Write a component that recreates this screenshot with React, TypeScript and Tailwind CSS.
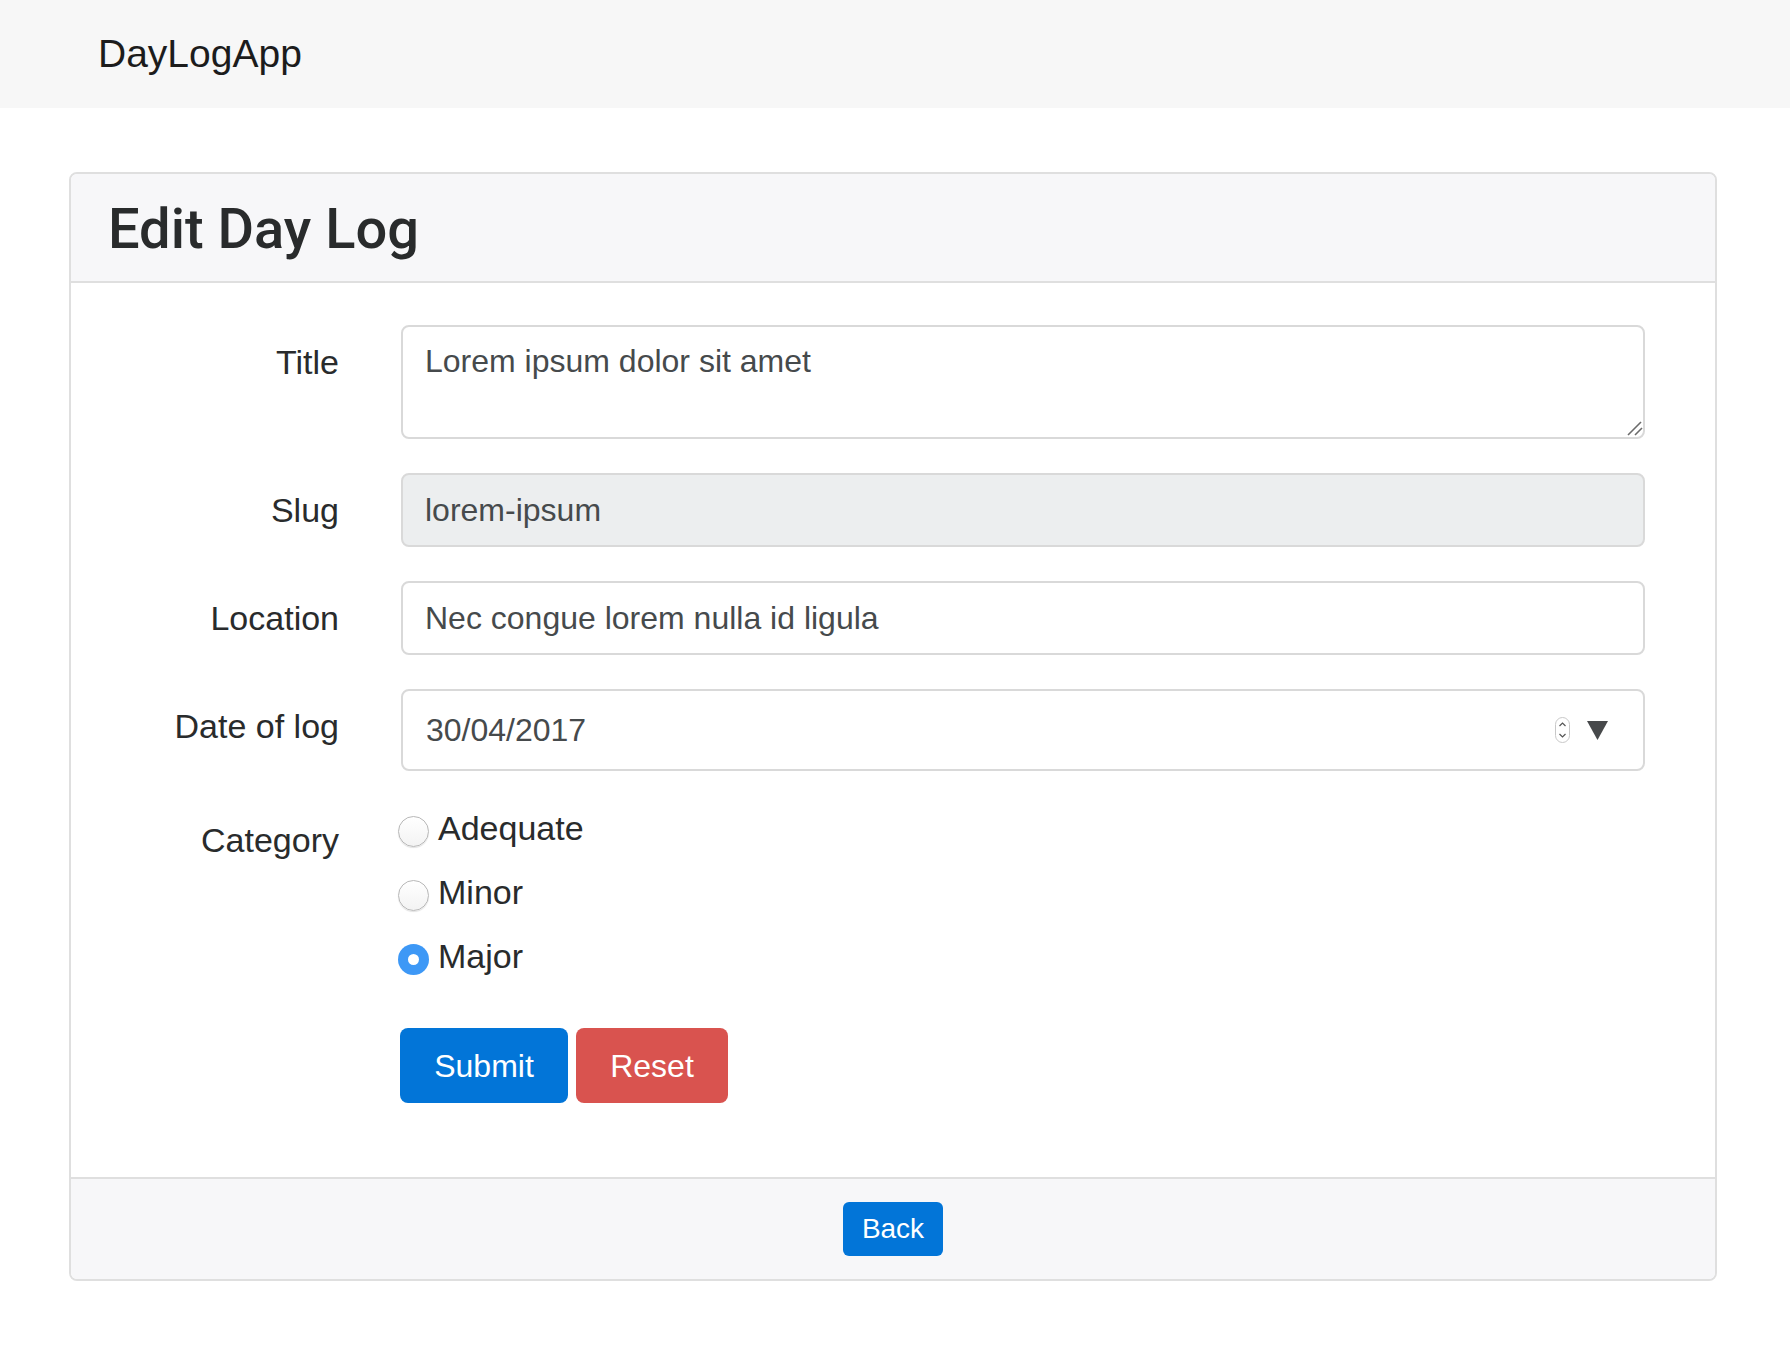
import { useState } from "react";

const categories = ["Adequate", "Minor", "Major"];

function FieldLabel({ children }: { children: React.ReactNode }) {
  return (
    <label className="w-[228px] shrink-0 h-[74px] flex items-center justify-end text-[34px] text-[#292b2c]">
      {children}
    </label>
  );
}

export default function App() {
  const [category, setCategory] = useState("Major");

  return (
    <div className="min-h-screen bg-white font-['Liberation_Sans',Arial,sans-serif] text-[#292b2c]">
      {/* navbar */}
      <nav className="h-[108px] bg-[#f7f7f7] flex items-center pl-[98px]">
        <a href="#" className="text-[39px] text-[#1c1c1c]">DayLogApp</a>
      </nav>

      <div className="pl-[69px] pr-[73px] mt-[64px]">
        <div className="border-2 border-[#dfdfdf] rounded-[8px] overflow-hidden">
          <div className="bg-[#f7f7f9] border-b-2 border-[#dfdfdf] pt-[25px] pb-[22px] px-[37px]">
            <h3 className="font-['Roboto',sans-serif] font-medium text-[56px] leading-[60px] text-[#292b2c]">
              Edit Day Log
            </h3>
          </div>

          <form className="pt-[42px] pb-[74px] pl-[40px] pr-[70px]" onSubmit={(e) => e.preventDefault()}>
            <div className="flex gap-[62px] mb-[34px]">
              <FieldLabel>Title</FieldLabel>
              <div className="relative flex-1 flex">
                <textarea
                  defaultValue="Lorem ipsum dolor sit amet"
                  className="flex-1 h-[114px] resize-none border-2 border-[#d9d9d9] rounded-[8px] px-[22px] pt-[14px] text-[32px] leading-[40px] text-[#464a4c] outline-none"
                />
                {/* resize grip */}
                <svg width="16" height="15" viewBox="0 0 16 15" className="absolute right-[2px] bottom-[3px] pointer-events-none">
                  <path d="M1 14 L14 1" stroke="#6b6b6b" strokeWidth="1.6" />
                  <path d="M8 14 L15 7" stroke="#6b6b6b" strokeWidth="1.6" />
                </svg>
              </div>
            </div>

            <div className="flex gap-[62px] mb-[34px]">
              <FieldLabel>Slug</FieldLabel>
              <input
                readOnly
                defaultValue="lorem-ipsum"
                className="flex-1 h-[74px] border-2 border-[#d9d9d9] rounded-[8px] px-[22px] bg-[#eceeef] text-[32px] text-[#464a4c] outline-none"
              />
            </div>

            <div className="flex gap-[62px] mb-[34px]">
              <FieldLabel>Location</FieldLabel>
              <input
                defaultValue="Nec congue lorem nulla id ligula"
                className="flex-1 h-[74px] border-2 border-[#d9d9d9] rounded-[8px] px-[22px] text-[32px] text-[#464a4c] outline-none"
              />
            </div>

            <div className="flex gap-[62px] mb-[25px]">
              <FieldLabel>Date of log</FieldLabel>
              <div className="flex-1 h-[82px] border-2 border-[#d9d9d9] rounded-[8px] pl-[23px] pr-[35px] flex items-center text-[32px] text-[#464a4c]">
                <span className="flex-1">30/04/2017</span>
                {/* stepper */}
                <svg width="15" height="26" viewBox="0 0 15 26" className="mr-[17px]">
                  <rect x="0.5" y="0.5" width="14" height="25" rx="7" fill="#fff" stroke="#c8c8c8" />
                  <path d="M4.5 9 L7.5 6 L10.5 9" fill="none" stroke="#555" strokeWidth="1.2" />
                  <path d="M4.5 17 L7.5 20 L10.5 17" fill="none" stroke="#555" strokeWidth="1.2" />
                </svg>
                <svg width="21" height="19" viewBox="0 0 21 19">
                  <path d="M0 0 H21 L10.5 19 Z" fill="#47494b" />
                </svg>
              </div>
            </div>

            <div className="flex gap-[62px]">
              <div className="w-[228px] shrink-0 mt-[7px]">
                <FieldLabel>Category</FieldLabel>
              </div>
              <div className="flex flex-col">
                {categories.map((c) => {
                  const on = category === c;
                  return (
                    <label
                      key={c}
                      onClick={() => setCategory(c)}
                      className="h-[64px] flex items-center text-[34px] text-[#292b2c] cursor-pointer"
                    >
                      <span
                        className={`-ml-[3px] mt-[6px] mr-[9px] w-[31px] h-[31px] rounded-full flex items-center justify-center ${
                          on
                            ? "bg-[#3d98f6]"
                            : "bg-gradient-to-b from-white to-[#f3f3f3] border border-[#b8b8b8] shadow-[0_1px_1px_rgba(0,0,0,0.12)]"
                        }`}
                      >
                        {on && <span className="w-[11px] h-[11px] rounded-full bg-white" />}
                      </span>
                      {c}
                    </label>
                  );
                })}
              </div>
            </div>

            <div className="flex gap-[62px] mt-[40px]">
              <div className="w-[228px] shrink-0" />
              <div className="flex gap-[8px] -ml-[1px]">
                <button type="submit" className="w-[168px] h-[75px] rounded-[8px] bg-[#0275d8] text-white text-[32px]">
                  Submit
                </button>
                <button type="reset" className="w-[152px] h-[75px] rounded-[8px] bg-[#d9534f] text-white text-[32px]">
                  Reset
                </button>
              </div>
            </div>
          </form>

          <div className="bg-[#f7f7f9] border-t-2 border-[#dfdfdf] py-[23px] flex justify-center">
            <button className="w-[100px] h-[54px] rounded-[6px] bg-[#0275d8] text-white text-[28px]">Back</button>
          </div>
        </div>
      </div>
    </div>
  );
}
